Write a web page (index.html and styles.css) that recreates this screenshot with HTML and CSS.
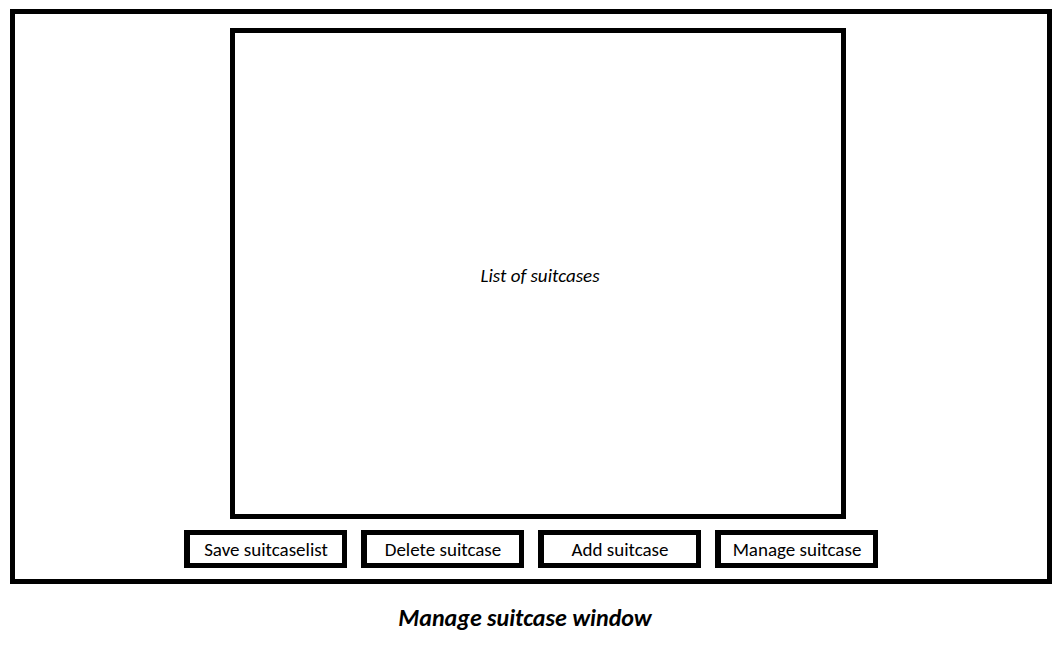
FILE: index.html
```html
<!DOCTYPE html>
<html lang="en">
<head>
<meta charset="utf-8">
<title>Manage suitcase window</title>
<link rel="stylesheet" href="styles.css">
</head>
<body>
<figure class="wireframe">
  <main class="window">
    <section class="list"><p class="list-label">List of suitcases</p></section>
    <div class="actions">
      <button class="action" type="button">Save suitcaselist</button>
      <button class="action" type="button">Delete suitcase</button>
      <button class="action" type="button">Add suitcase</button>
      <button class="action" type="button">Manage suitcase</button>
    </div>
  </main>
  <figcaption class="caption">Manage suitcase window</figcaption>
</figure>
</body>
</html>
```
FILE: styles.css
```css
* {
  box-sizing: border-box;
}

body {
  margin: 0;
  background: #fff;
  color: #000;
  font-family: Carlito, Lato, sans-serif;
}

.wireframe {
  display: flex;
  flex-direction: column;
  min-height: 100vh;
  margin: 0;
  padding: 9px 11px 16px 10px;
}

.window {
  flex: 1;
  display: flex;
  flex-direction: column;
  align-items: center;
  gap: 11px;
  padding: 14px 16px 11px;
  border: 5px solid #000;
}

.list {
  flex: 1;
  display: flex;
  align-items: center;
  justify-content: center;
  width: 61.6%;
  margin-left: 14px;
  padding: 4px 0 0 4px;
  border: 5px solid #000;
}

.list-label {
  margin: 0;
  font-size: 19px;
  font-style: italic;
}

.actions {
  display: flex;
  flex-wrap: wrap;
  justify-content: center;
  gap: 14px;
}

.action {
  width: 163px;
  height: 38px;
  padding: 0;
  border: 5px solid #000;
  border-left-width: 6px;
  background: #fff;
  color: #000;
  font-family: inherit;
  font-size: 19px;
}

.caption {
  padding: 18px 12px 2px 0;
  font-size: 24px;
  line-height: 32px;
  font-weight: 700;
  font-style: italic;
  text-align: center;
}
```
